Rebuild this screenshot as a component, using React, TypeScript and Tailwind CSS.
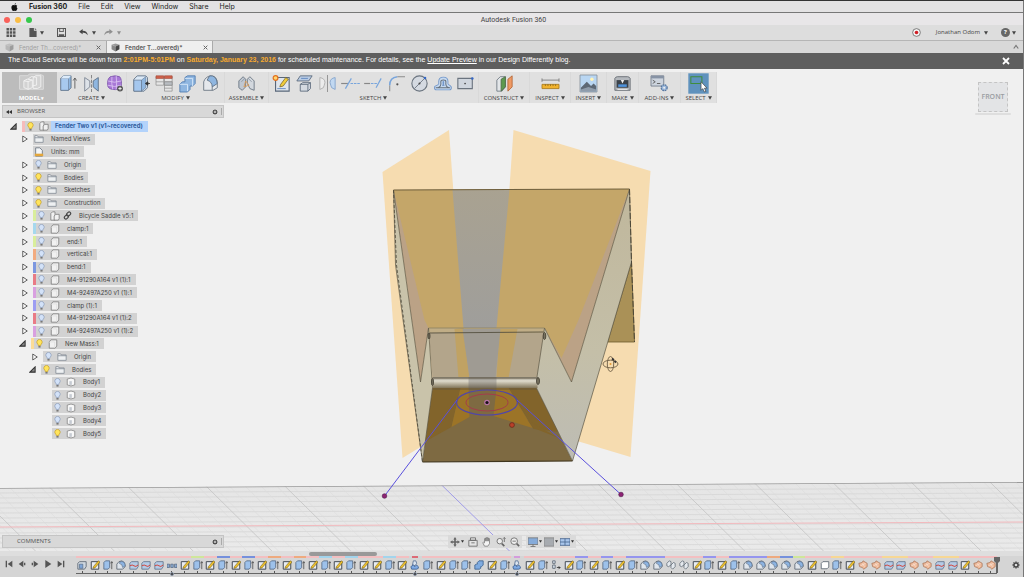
import React from "react";

/* ---------- small glyphs ---------- */

const Caret = () => (
  <svg viewBox="0 0 6 5" className="h-[4px] w-[4px] shrink-0" aria-hidden="true">
    <path d="M0 0h6L3 5z" fill="#444" />
  </svg>
);

const Gear = ({ className }: { className: string }) => (
  <svg viewBox="0 0 16 16" className={className} aria-hidden="true">
    <g stroke="#444" strokeWidth="2.6">
      <path d="M8 1v14M1 8h14M3 3l10 10M13 3L3 13" />
    </g>
    <circle cx="8" cy="8" r="5" fill="#444" />
    <circle cx="8" cy="8" r="2.6" fill="#ddd" />
  </svg>
);

const Cube = ({ dim }: { dim?: boolean }) => (
  <svg viewBox="0 0 16 16" className={dim ? "h-[9px] w-[9px] opacity-40" : "h-[9px] w-[9px]"} aria-hidden="true">
    <path d="M1 3l7-2 7 2-6 3z" fill="#999" />
    <path d="M1 3l7 3v9L1 11z" fill="#888" />
    <path d="M8 6l7-3v8l-7 4z" fill="#444" />
  </svg>
);

/* ---------- ribbon icons, 20 x 20 ---------- */

const B = "#8fb6e0";
const E = "#5a6b80";

const ribbonArt: Record<string, React.ReactNode> = {
  model: (
    <g stroke="#f4f4f4" strokeWidth="1" fill="#d3d3d3">
      <path d="M-4 2h9l3-2h11l5 2v16H-4z" fill="#cacaca" stroke="#dedede" />
      <path d="M12 4l3-2h6v13l-4 2h-5z" />
      <path d="M1 8l4-2 6 1v9l-5 2-5-2z" />
      <path d="M1 8l5 1v9M6 9l5-2" fill="none" />
      <path d="M6 6l4-3 6 1v9l-5 1" fill="none" />
    </g>
  ),
  extrude: (
    <g>
      <path d="M1 4l3-3h9v14l-3 3H1z" fill={B} stroke={E} />
      <path d="M1 4h9v14H1z" fill="#a8c9ee" stroke={E} strokeWidth=".6" />
      <path d="M1 4l3-3h9l-3 3z" fill="#dcebfa" />
      <path d="M17.500 16V4M15.500 6.500l2-3 2 3" fill="none" stroke="#555" />
    </g>
  ),
  mirror: (
    <g>
      <path d="M2 3l6 4v7l-6 5z" fill="#dde2e8" stroke="#77818f" />
      <path d="M18 3l-6 4v7l6 5z" fill={B} stroke={E} />
      <path d="M10 0v20" stroke="#777" strokeDasharray="4 1.500" />
    </g>
  ),
  form: (
    <g>
      <path d="M5 2q6-2 11 0 3 3 2 12-3 4-10 3-6-1-6-5-1-7 3-10z" fill="#a878d6" stroke="#7c55aa" />
      <path d="M2 7q8 3 16 0M2 12q8 3 16 0M7 2q-1 8 1 15M12 1q1 8 0 16" fill="none" stroke="#e0ccf4" strokeWidth=".9" />
      <circle cx="16.500" cy="16" r="3.500" fill="#555" />
      <path d="M14.500 16h4M16.500 14v4" stroke="#fff" />
    </g>
  ),
  press: (
    <g>
      <path d="M1 5l4-4h10l2 2v12l-4 4H1z" fill="#dbe9f7" stroke={E} />
      <path d="M1 6h9v13H1z" fill="#a5c7ee" stroke={E} strokeWidth=".7" />
      <path d="M10 6l5-4v13l-5 4z" fill={B} stroke={E} strokeWidth=".6" />
      <path d="M20 10h-4M17.500 8L14.500 10l3 2z" fill="#333" stroke="#333" />
    </g>
  ),
  change: (
    <g stroke="#8a8a8a" strokeWidth=".8">
      <path d="M0 2h9v10H0zM10 2h9v17h-9z" fill="#e6e6e6" />
      <path d="M0 1h9v3H0zM10 1h9v3h-9z" fill="#d2614b" stroke="#a55040" />
      <path d="M0 8h9M10 8h9M10 12h9M10 15.500h9" />
      <path d="M10 8h9v4h-9z" fill="#b9bdc2" />
    </g>
  ),
  combine: (
    <g>
      <path d="M7 3l3-2h9v9l-3 3h-3v4l-3 3H1V11l3-3h3z" fill={B} stroke="#4b78ae" />
      <path d="M7 4h9v9M1 11h9v8" fill="none" stroke="#dcebfa" />
    </g>
  ),
  fillet: (
    <g>
      <path d="M2 18V8q2-6 8-7 8 0 8 9v5l-5 3z" fill="#e5e8ec" stroke="#66717e" />
      <path d="M9 1q8-1 9 9l-6 4q0-6-6-8z" fill={B} stroke={E} />
      <path d="M12 14v4" stroke="#66717e" />
    </g>
  ),
  joint: (
    <g>
      <path d="M1 7l5-5 3 3v9l-4 4-4-3z" fill="#bfc7d1" stroke="#66717e" />
      <path d="M19 7l-5-5-3 3v5l3 6 5 2z" fill="#d3d8de" stroke="#66717e" />
      <path d="M4 8l4-4M16 8l-4-4" fill="none" stroke="#8b95a2" />
      <path d="M9 7l4 5-6 2z" fill="none" stroke="#d99a55" />
    </g>
  ),
  sketch: (
    <g>
      <path d="M3 3h16v16H3z" fill="#dfe5ed" stroke="#596779" strokeWidth="1.300" />
      <path d="M5 16h10" stroke="#5a83bd" />
      <path d="M9 11l6-8 3 2-6 8-4 1z" fill="#f0cc3c" stroke="#6b5820" strokeWidth=".8" />
      <circle cx="3" cy="3.500" r="2.800" fill="#ffd56c" stroke="#e26f1e" strokeWidth="1.400" />
    </g>
  ),
  project: (
    <g>
      <path d="M5 1h14l-4 6H1z" fill="#b8cbe4" stroke="#596779" />
      <path d="M5 11l3-2h9v7l-3 3H5z" fill="#d5dae1" stroke="#596779" />
      <path d="M5 11h9v8M14 11l3-2" fill="none" stroke="#596779" />
      <path d="M6 4h8" stroke="#5a83bd" />
    </g>
  ),
  mirror2: (
    <g>
      <path d="M1 17V3q6 1 6 6-1 4-2 6z" fill="#ececec" stroke="#aaa" />
      <path d="M19 17V3q-6 1-6 6 1 4 2 6z" fill="#c1d8f1" stroke="#7fa1ca" />
      <path d="M10 0v20" stroke="#888" />
    </g>
  ),
  trim: (
    <g strokeWidth="1.400">
      <path d="M-1 10h8" stroke="#888" />
      <path d="M10 10h11" stroke="#78a5dc" strokeDasharray="3 1" />
      <path d="M4 16l7-12" stroke="#78a5dc" />
    </g>
  ),
  extend: (
    <g strokeWidth="1.400">
      <path d="M-1 10h7" stroke="#888" />
      <path d="M7 10h8" stroke="#78a5dc" strokeDasharray="3 1" />
      <path d="M13 15l6-11" stroke="#78a5dc" />
    </g>
  ),
  arc: (
    <g fill="none">
      <path d="M2 19V12" stroke="#999" strokeWidth="1.400" />
      <path d="M2 12q0-9 9-10" stroke="#78a5dc" strokeWidth="1.800" />
      <path d="M11 2h9" stroke="#999" strokeWidth="1.400" />
      <circle cx="11" cy="11" r="1.300" fill="#555" />
    </g>
  ),
  circle: (
    <g>
      <circle cx="10" cy="10" r="9" fill="#d5dae1" stroke="#6b747f" strokeWidth="1.300" />
      <path d="M4 16L16 4" stroke="#6b747f" />
      <circle cx="16.500" cy="3.500" r="1.500" fill="#3567c4" />
      <circle cx="10" cy="10" r="1.200" fill="#444" />
    </g>
  ),
  offset: (
    <g fill="none" strokeLinejoin="round">
      <path d="M3 15h15M5 14q4-1 3-6 0-3 3-3t3 3q-1 5 3 6" stroke="#7196c9" strokeWidth="6" strokeLinecap="round" />
      <path d="M3 15h15M5 14q4-1 3-6 0-3 3-3t3 3q-1 5 3 6" stroke="#c6d9ef" strokeWidth="4" strokeLinecap="round" />
      <path d="M2 15h17M4 15q5-1 4-7 0-2 3-2t3 2q-1 6 4 7" stroke="#66717e" strokeWidth="1.200" />
    </g>
  ),
  rect: (
    <g>
      <path d="M1 4h17v12H1z" fill="#d0d6de" stroke="#6b747f" strokeWidth="1.300" />
      <circle cx="18" cy="4" r="1.500" fill="#3567c4" />
      <circle cx="9.500" cy="10" r="1" fill="#444" />
    </g>
  ),
  construct: (
    <g>
      <path d="M1 6l4-4h6v12l-4 5H1z" fill="#e3e6e9" stroke="#6c7680" />
      <path d="M6 5l5-3v12l-5 5z" fill="#5d9a4e" stroke="#4b6b45" />
      <path d="M14 5l5-4v13l-5 5z" fill="#ef9a64" stroke="#b46535" />
    </g>
  ),
  inspect: (
    <g>
      <path d="M0 6h20M0 4v4M20 4v4" stroke="#777" />
      <path d="M0 11h20v5H0z" fill="#f1b32e" stroke="#a87b1d" />
      <path d="M4 11v2M7 11v2M10 11v2M13 11v2M16 11v2" stroke="#7b5a12" strokeWidth=".8" />
    </g>
  ),
  insert: (
    <g>
      <path d="M0 0h20v20H0z" fill="#b9d6f2" stroke="#8a929c" />
      <circle cx="14" cy="5" r="2" fill="#fff4b8" />
      <path d="M1 15l7-7 5 5 3-3 3 3v6H1z" fill="#5d6875" />
      <path d="M1 17l9-3 9 3v2H1z" fill="#8f9cab" />
    </g>
  ),
  make: (
    <g>
      <path d="M1 4q1-2 3-2h12q2 0 3 2v14H1z" fill="#b4b8bd" stroke="#60666d" />
      <path d="M3 6h14v9H3z" fill="#3b424a" />
      <path d="M8 6h4l-2 4z" fill="#eee" />
      <path d="M5 11h10v3H5z" fill="#4e92dc" />
      <path d="M4 17h12" stroke="#eee" />
    </g>
  ),
  addins: (
    <g>
      <path d="M0 1h15v12H0z" fill="#cdd4de" stroke="#6f7a88" />
      <path d="M0 1h15v3H0z" fill="#8793a5" />
      <path d="M2 6l3 2-3 2M7 10h4" fill="none" stroke="#555" />
      <circle cx="15.500" cy="15" r="3.500" fill="#9cb9dd" stroke="#58779f" strokeWidth="1.500" strokeDasharray="2 .8" />
      <circle cx="15.500" cy="15" r="1.200" fill="#eee" />
    </g>
  ),
  select: (
    <g>
      <path d="M-2-2h24v24H-2z" fill="#5f92bd" />
      <path d="M1 2h13v8H1z" fill="none" stroke="#3f8d3b" strokeWidth="1.200" />
      <path d="M13 8v10l2-2 2 4 1.700-.8-1.700-3.700H20z" fill="#fff" stroke="#333" strokeWidth=".7" />
    </g>
  ),
};

const groups: { name: string; width: string; icons: string[] }[] = [
  { name: "CREATE", width: "w-[70px]", icons: ["extrude", "mirror", "form"] },
  { name: "MODIFY", width: "w-[98px]", icons: ["press", "change", "combine", "fillet"] },
  { name: "ASSEMBLE", width: "w-[44px]", icons: ["joint"] },
  {
    name: "SKETCH",
    width: "w-[210px]",
    icons: ["sketch", "project", "mirror2", "trim", "extend", "arc", "circle", "offset", "rect"],
  },
  { name: "CONSTRUCT", width: "w-[51px]", icons: ["construct"] },
  { name: "INSPECT", width: "w-[41px]", icons: ["inspect"] },
  { name: "INSERT", width: "w-[36px]", icons: ["insert"] },
  { name: "MAKE", width: "w-[32px]", icons: ["make"] },
  { name: "ADD-INS", width: "w-[42px]", icons: ["addins"] },
  { name: "SELECT", width: "w-[36px]", icons: ["select"] },
];

const RibbonIcon = ({ id }: { id: string }) => (
  <svg viewBox="0 0 20 20" className="h-[17px] w-[17px] overflow-visible" aria-hidden="true">
    {ribbonArt[id]}
  </svg>
);

function Ribbon() {
  return (
    <div className="ml-[2px] flex h-[31px] w-fit bg-[#e0e0e0] text-[6px] leading-[8px] text-[#444]">
      <button className="flex w-[55px] flex-col items-center gap-[3px] bg-[#bcbcbc] pt-[2px] pl-[4px] font-bold text-white">
        <RibbonIcon id="model" />
        <span className="flex items-center gap-px">
          MODEL<span className="text-[5px]">▾</span>
        </span>
      </button>
      {groups.map((g) => (
        <div key={g.name} className={`flex flex-col items-center gap-[2px] border-r border-[#d9d9d9] pt-[3px] ${g.width}`}>
          <div className="flex gap-[6px]">
            {g.icons.map((i) => (
              <button key={i} aria-label={i}>
                <RibbonIcon id={i} />
              </button>
            ))}
          </div>
          <button className="flex items-center gap-[2px] whitespace-nowrap">
            {g.name}
            <Caret />
          </button>
        </div>
      ))}
    </div>
  );
}

/* ---------- browser tree ---------- */

const Bulb = ({ on }: { on: boolean }) => (
  <svg viewBox="0 0 8 11" className="h-[9px] w-[7px] shrink-0" aria-hidden="true">
    <path
      d="M4 .5a3.300 3.300 0 0 1 2 5.900L5.500 8h-3L2 6.400A3.300 3.300 0 0 1 4 .5z"
      fill={on ? "#ffe45c" : "#d3e2f8"}
      stroke={on ? "#c39a1d" : "#8698b8"}
      strokeWidth=".8"
    />
    <path d="M2.700 8.500h2.600v2H2.700z" fill="#777" />
  </svg>
);

const nodeArt: Record<string, React.ReactNode> = {
  folder: <path d="M1 2h3l1 1.500h6V10H1zM1 4.500h10" fill="#eef0f2" stroke="#7d8590" strokeWidth=".9" />,
  units: (
    <g>
      <path d="M2 1h5l3 3v7H2z" fill="#f4f6f8" stroke="#66717e" />
      <path d="M1 8h10v3H1z" fill="#e3a63b" />
    </g>
  ),
  assembly: (
    <g fill="#f1f1f1" stroke="#737373" strokeWidth=".9">
      <path d="M1 3l2-2h3v10H1z" />
      <path d="M5 6l2-2h4v5l-1 2H5z" />
    </g>
  ),
  part: (
    <g fill="#f1f1f1" stroke="#737373" strokeLinejoin="round" strokeWidth=".9">
      <path d="M1.500 3.500l2-2.500h7v7.500l-2 2.500h-7z" />
      <path d="M1.500 3.500h6.500v7" stroke="#d5d5d5" strokeWidth=".6" />
    </g>
  ),
  body: (
    <g>
      <path d="M1.500 2.500q4.500-2.500 9 0v7q-4.500 2.500-9 0z" fill="#f8f8f8" stroke="#7d7d7d" strokeWidth=".9" />
      <path d="M4 5h3v4.500H4z" fill="#c5cad2" />
    </g>
  ),
};

const NodeIcon = ({ id }: { id: string }) => (
  <svg viewBox="0 0 12 12" className="h-[10px] w-[10px] shrink-0" aria-hidden="true">
    {nodeArt[id]}
  </svg>
);

type Row = {
  text: string;
  icon: string;
  indent: string;
  arrow?: "open" | "closed";
  bulb?: "on" | "off";
  stripe?: string;
  link?: boolean;
  root?: boolean;
};

const rows: Row[] = [
  { text: "Fender Two v1 (v1~recovered)", icon: "assembly", indent: "ml-[10px]", arrow: "open", bulb: "on", stripe: "bg-[#f6bcbc]", root: true },
  { text: "Named Views", icon: "folder", indent: "ml-[21px]", arrow: "closed" },
  { text: "Units: mm", icon: "units", indent: "ml-[21px]" },
  { text: "Origin", icon: "folder", indent: "ml-[21px]", arrow: "closed", bulb: "off" },
  { text: "Bodies", icon: "folder", indent: "ml-[21px]", arrow: "closed", bulb: "on" },
  { text: "Sketches", icon: "folder", indent: "ml-[21px]", arrow: "closed", bulb: "on" },
  { text: "Construction", icon: "folder", indent: "ml-[21px]", arrow: "closed", bulb: "on" },
  { text: "Bicycle Saddle v5:1", icon: "assembly", indent: "ml-[21px]", arrow: "closed", bulb: "off", stripe: "bg-[#d9ee9c]", link: true },
  { text: "clamp:1", icon: "part", indent: "ml-[21px]", arrow: "closed", bulb: "off", stripe: "bg-[#a5d8ee]" },
  { text: "end:1", icon: "part", indent: "ml-[21px]", arrow: "closed", bulb: "off", stripe: "bg-[#d9ee9c]" },
  { text: "vertical:1", icon: "part", indent: "ml-[21px]", arrow: "closed", bulb: "off", stripe: "bg-[#f2ab80]" },
  { text: "bend:1", icon: "part", indent: "ml-[21px]", arrow: "closed", bulb: "off", stripe: "bg-[#7c97e0]" },
  { text: "M4-91290A164 v1 (1):1", icon: "part", indent: "ml-[21px]", arrow: "closed", bulb: "off", stripe: "bg-[#e97b85]" },
  { text: "M4-92497A250 v1 (1):1", icon: "part", indent: "ml-[21px]", arrow: "closed", bulb: "off", stripe: "bg-[#d9a0e0]" },
  { text: "clamp (1):1", icon: "part", indent: "ml-[21px]", arrow: "closed", bulb: "off", stripe: "bg-[#9d9df2]" },
  { text: "M4-91290A164 v1 (1):2", icon: "part", indent: "ml-[21px]", arrow: "closed", bulb: "off", stripe: "bg-[#e97b85]" },
  { text: "M4-92497A250 v1 (1):2", icon: "part", indent: "ml-[21px]", arrow: "closed", bulb: "off", stripe: "bg-[#d9a0e0]" },
  { text: "New Mass:1", icon: "part", indent: "ml-[19px]", arrow: "open", bulb: "on", stripe: "bg-[#fbdc98]" },
  { text: "Origin", icon: "folder", indent: "ml-[31px]", arrow: "closed", bulb: "off" },
  { text: "Bodies", icon: "folder", indent: "ml-[29px]", arrow: "open", bulb: "on" },
  { text: "Body1", icon: "body", indent: "ml-[40px]", bulb: "off" },
  { text: "Body2", icon: "body", indent: "ml-[40px]", bulb: "off" },
  { text: "Body3", icon: "body", indent: "ml-[40px]", bulb: "off" },
  { text: "Body4", icon: "body", indent: "ml-[40px]", bulb: "off" },
  { text: "Body5", icon: "body", indent: "ml-[40px]", bulb: "on" },
];

const TreeRow = ({ row }: { row: Row }) => (
  <li className={`flex flex-1 items-center ${row.indent}`}>
    <span className="flex w-[12px] shrink-0 items-center">
      {row.arrow === "closed" && (
        <svg viewBox="0 0 8 10" className="ml-px h-[8px] w-[6px]" aria-hidden="true">
          <path d="M1 1l6 4-6 4z" fill="#fafafa" stroke="#444" strokeWidth="1.100" />
        </svg>
      )}
      {row.arrow === "open" && (
        <svg viewBox="0 0 8 8" className="h-[7px] w-[7px]" aria-hidden="true">
          <path d="M7 1v6H1z" fill="#888" stroke="#333" strokeWidth="1.200" />
        </svg>
      )}
    </span>
    <span className={`flex h-[11px] items-center bg-[#d2d2d2] ${row.root ? "" : "pr-[5px]"}`}>
      {row.stripe && <span className={`h-full w-[3px] ${row.stripe}`} />}
      {row.bulb && (
        <span className="mr-[4px] ml-[2px] flex">
          <Bulb on={row.bulb === "on"} />
        </span>
      )}
      <span className="ml-px flex">
        <NodeIcon id={row.icon} />
      </span>
      {row.link && (
        <svg viewBox="0 0 12 12" className="ml-[3px] h-[9px] w-[9px]" aria-hidden="true">
          <g fill="none" stroke="#444" strokeWidth="1.500">
            <rect x="5.500" y="1" width="4" height="6" rx="2" transform="rotate(45 7.500 4)" />
            <rect x="2.500" y="5" width="4" height="6" rx="2" transform="rotate(45 4.500 8)" />
          </g>
        </svg>
      )}
      {row.root ? (
        <span className="ml-[2px] flex h-full items-center bg-[#b3d3fb] pr-[5px] pl-[4px] font-bold text-[#2f5d9e]">{row.text}</span>
      ) : (
        <span className="ml-[7px]">{row.text}</span>
      )}
    </span>
  </li>
);

const PanelBar = ({ title, collapse }: { title: string; collapse?: boolean }) => (
  <div className="ml-[2px] flex h-[13px] w-[222px] items-center border border-[#c4c4c4] bg-[#d8d8d8] pr-px pl-[3px] text-[6px] text-[#555]">
    <span className="w-[11px]">
      {collapse && (
        <svg viewBox="0 0 12 8" className="h-[4px] w-[6px]" aria-hidden="true">
          <path d="M6 0v8L0 4zM12 0v8L6 4z" fill="#333" />
        </svg>
      )}
    </span>
    <span className="flex-1">{title}</span>
    <Gear className="h-[6px] w-[6px]" />
    <span className="ml-[3px] h-[7px] w-px bg-[#aaa]" />
  </div>
);

/* ---------- 3D scene ---------- */

const range = (n: number) => Array.from({ length: n }, (_, i) => i);

function Scene() {
  return (
    <svg
      viewBox="0 69 1024 482"
      preserveAspectRatio="xMidYMax slice"
      className="absolute inset-0 h-full w-full"
      aria-hidden="true"
    >
      <defs>
        <clipPath id="floor">
          <path d="M0 488L1024 482V551H0z" />
        </clipPath>
        <linearGradient id="ground" x1="0" y1="0" x2="0" y2="1">
          <stop offset="0" stopColor="#e5e5e5" />
          <stop offset="1" stopColor="#eaeaea" />
        </linearGradient>
        <linearGradient id="roll" x1="0" y1="0" x2="0" y2="1">
          <stop offset="0" stopColor="#8b8577" />
          <stop offset=".35" stopColor="#e0dccd" />
          <stop offset="1" stopColor="#817559" />
        </linearGradient>
        <linearGradient id="stripe" x1="0" y1="0" x2="0" y2="1">
          <stop offset="0" stopColor="#a9a291" />
          <stop offset="1" stopColor="#9f9e9b" />
        </linearGradient>
        <linearGradient id="wall" x1="0" y1="0" x2="0" y2="1">
          <stop offset="0" stopColor="#c0b79c" />
          <stop offset=".6" stopColor="#c4bfa8" />
          <stop offset="1" stopColor="#bdbcb4" />
        </linearGradient>
      </defs>

      <path d="M0 69h1024v482H0z" fill="#f0f0f0" />

      <g clipPath="url(#floor)">
        <path d="M0 480h1024v71H0z" fill="url(#ground)" />
        <g stroke="#d6d6d6" strokeWidth=".8">
          {range(13).map((i) => (
            <path key={i} d={`M0 ${493 + i * 5}L1024 ${488 + i * 5}`} />
          ))}
        </g>
        <g stroke="#dcdcdc" strokeWidth=".6">
          {range(72).map((i) => (
            <path key={i} d={`M${-108 + i * 15.8} 480l74 74`} />
          ))}
        </g>
        <g stroke="#c4c4c4" strokeWidth=".8">
          {range(14)
            .filter((i) => i !== 6)
            .map((i) => (
              <path key={i} d={`M${-36 + i * 78.8} 480l74 73`} />
            ))}
        </g>
        <path d="M0 527L1024 522" stroke="#f2b9bd" />
        <path d="M437 480l74 72" stroke="#a09ce8" />
        <path d="M0 488L1024 482" stroke="#9a9a9a" strokeWidth="1.600" />
      </g>

      {/* construction planes behind the part */}
      <path d="M383 172l66.500-42L470 417l-67 41z" fill="#f6dcb0" />
      <path d="M514 130l137 41-20 286-137-41z" fill="#f6dcb0" />

      {/* back panel */}
      <path d="M394 190l236-1-58 193-27-54H429l-8 54z" fill="#bba286" />
      <path d="M394 190l236-1-51 131-17 38-17-30H429l-4-8z" fill="#c4a669" />
      <path d="M453 190l57-1-13 139h-33z" fill="url(#stripe)" />

      {/* side flange */}
      <path d="M632 262l3 80h-27z" fill="#aa9157" stroke="#6d5a2e" strokeWidth=".8" />

      {/* inner rear plate */}
      <path d="M429 328h116l-7 50H433z" fill="#b3a58b" />
      <path d="M429 328h116l-1 5H430z" fill="#c0ad86" />
      <path d="M455 329l9-1 6 50h-11z" fill="#c0a263" />
      <path d="M500 329h18l-9 49h-12z" fill="#c0a263" />
      <path d="M463 329h38l-5 49h-26z" fill="#9f9b93" />

      {/* bottom plate */}
      <path d="M433 388h104l36 73-150 1z" fill="#7e6a42" />
      <path d="M433 388h28l-9 39-27 15z" fill="#82642b" />
      <path d="M509 388h28l22 44-25-3z" fill="#82642b" />
      <path d="M461 388h8l1 29-18 10z" fill="#9c7427" />
      <path d="M497 388h12l24 40-39-12z" fill="#9c7427" />
      <path d="M534 428l-6-8 31 18z" fill="#82642b" />

      {/* side walls */}
      <path d="M394 190l27 192 8-54 4 60-10 74-27-197z" fill="#c9c3aa" stroke="#5c5645" strokeWidth=".7" />
      <path d="M630 189l-58 193-27-54-8 52v8l36 73 59-199z" fill="url(#wall)" stroke="#5c5645" strokeWidth=".7" />
      <path d="M394 190l3 75 26 197" fill="none" stroke="#4c4738" strokeWidth=".8" strokeDasharray="3 2" />
      <path d="M630 189l2 73 3 80" fill="none" stroke="#4c4738" strokeDasharray="6 2" />
      <path d="M394 190l236-1" stroke="#6f5f3c" strokeWidth="1.200" />
      <path d="M423 462l150-1" stroke="#3f351e" strokeWidth="1.200" />
      <path d="M430 333l114-1" stroke="#55503f" strokeWidth=".9" />
      <path d="M429 328h116" stroke="#8c8262" strokeWidth=".8" />

      {/* hinge roll */}
      <rect x="433" y="377" width="105" height="11" fill="url(#roll)" />
      <path d="M469 377h28v11h-28z" fill="#55555e" opacity=".3" />
      <path d="M433 378h105M433 389h104" stroke="#5f5541" strokeWidth=".8" />
      <g fill="#77725f" stroke="#3d392e" strokeWidth=".8">
        <ellipse cx="433" cy="382" rx="1" ry="3.500" />
        <ellipse cx="538.500" cy="381" rx="1.500" ry="3.500" />
        <ellipse cx="429.500" cy="336" rx="1" ry="3" />
        <ellipse cx="545" cy="336" rx="1.300" ry="3.500" />
      </g>

      {/* sketch curves */}
      <g fill="none">
        <ellipse cx="487.500" cy="402.500" rx="30.500" ry="12.500" stroke="#5146a8" strokeWidth="1.200" />
        <ellipse cx="487.500" cy="402.500" rx="21" ry="8.500" stroke="#a33c4c" />
        <path d="M457.500 400L385 496M517.500 400l104 94.500" stroke="#5a50dd" />
      </g>
      <g fill="#8e2374" stroke="#4e194a" strokeWidth=".6">
        <circle cx="385" cy="496" r="2.300" />
        <circle cx="621.500" cy="494.500" r="2.300" />
      </g>
      <circle cx="487.500" cy="402.500" r="2.800" fill="#b673a4" />
      <circle cx="487.500" cy="402.500" r="1.600" fill="#181018" />
      <circle cx="512.500" cy="425" r="2.400" fill="#b9402a" stroke="#6d2a18" strokeWidth=".8" />

      {/* orbit pointer */}
      <g fill="none" stroke="#6d5d45" strokeWidth=".9">
        <ellipse cx="611" cy="364" rx="7.500" ry="3.800" />
        <ellipse cx="611" cy="364" rx="3.200" ry="7.500" />
        <path d="M612.500 358.500l2 1.500M615 361l1.500 1.500" stroke="#333" strokeWidth="1.800" />
        <circle cx="611" cy="364" r="1" fill="#e29a35" stroke="none" />
      </g>
    </svg>
  );
}

/* ---------- timeline ---------- */

const stepArt: Record<string, React.ReactNode> = {
  s: (
    <g>
      <path d="M1.500 2h9v9h-9z" fill="#e9edf2" stroke="#444b55" strokeWidth="1.200" />
      <path d="M4 8l6-7 2 1.500-6 7-2.500.5z" fill="#efc22f" stroke="#5c4a12" strokeWidth=".6" />
    </g>
  ),
  e: (
    <g>
      <path d="M1 3l2-2h5v8l-2 2H1z" fill="#9dc1ea" stroke="#4c617c" strokeWidth=".9" />
      <path d="M10.500 11V2M9 4l1.500-2L12 4" fill="none" stroke="#444" strokeWidth=".9" />
    </g>
  ),
  f: (
    <g>
      <path d="M1 11V5q2-4 6-4 4 1 4 6v1l-3 3z" fill="#dfe5ec" stroke="#5a6470" />
      <path d="M5 2q6-1 6 5L8 9q0-4-4-5z" fill="#8db4e2" stroke="#4c617c" strokeWidth=".7" />
    </g>
  ),
  p: (
    <g>
      <path d="M1 4l2-2h8v6l-2 3H1z" fill="#b4cbe6" stroke="#566a83" strokeWidth=".9" />
      <path d="M1 7q3-2 5 0t5-1" fill="none" stroke="#d2453c" strokeWidth="1.200" />
    </g>
  ),
  d: <path d="M0 5h3v4H0zM4.500 5h3v4h-3zM9 5h3v4H9z" fill="#8ba9d0" stroke="#4c617c" strokeWidth=".8" />,
  c: (
    <g>
      <path d="M1 4l2-2h8v6l-2 3H1z" fill="#cfd7e0" stroke="#5a6470" />
      <path d="M3 5h4v5H3z" fill="#7fa5d6" stroke="#4c617c" strokeWidth=".7" />
    </g>
  ),
  b: <path d="M1.500 4l2-2h7v6.500l-2 2h-7z" fill="#fff" stroke="#5a6470" />,
  m: <path d="M4 3l2-2h5v5L9 8H8v2l-1.500 1H1V6l2-1h1z" fill="#7fabe0" stroke="#40648f" />,
  j: (
    <g>
      <path d="M4 1h3l1 3-2 3-3-1z" fill="#dce5f0" stroke="#47628a" strokeWidth=".9" />
      <path d="M1 8l3-2 2 2 2-2 2 2v2l-2 1H2z" fill="#7faae4" stroke="#32578c" strokeWidth=".9" />
    </g>
  ),
  a: (
    <g>
      <path d="M2 1h3v3H2zM2 6h3v4H2z" fill="#dce5f0" stroke="#5a6470" />
      <path d="M7 9h4M9 8l2 1-2 2" fill="none" stroke="#333" />
    </g>
  ),
  l: (
    <g fill="#e5e9ee" stroke="#5a6470" strokeWidth=".9">
      <path d="M1 4l3-3 2 1v4L3 8 1 7z" />
      <path d="M6 6l3-3 2 1v4l-3 3-2-2z" />
    </g>
  ),
  w: (
    <g stroke="#a0684a" strokeWidth=".8">
      <path d="M1 4l4-1 1-2 5 3v4l-4 3-2-2-3-1z" fill="#efbb9c" />
      <path d="M5 4l3 4M3 7l6-3" stroke="#f8e6da" />
    </g>
  ),
};

const stripColors: Record<string, string> = {
  P: "bg-[#f3bfc1]",
  L: "bg-[#cfe69a]",
  B: "bg-[#7590dc]",
  O: "bg-[#eeaa7f]",
  C: "bg-[#a2d4ec]",
  R: "bg-[#dd6a76]",
  V: "bg-[#d49cdc]",
  I: "bg-[#9595ee]",
  Y: "bg-[#f7d794]",
};

const steps = "csefpppdsesesesesesesessesjeseemsejseaseseseffllsesefffffsbeswwppwwppsww";
const strips = "PPPPPPPPPLPBPBPOPOPCPCPPCPRPPPPPPPVPPPPIPIPIIIPPPIPIIIOBLPPYPPPYYPPYYPPP";

const transport = [
  "M1 1h2v10H1zM11 1v10L4 6z",
  "M8 1v10L1 6zM9 4h2v4H9z",
  "M4 1v10l7-5zM1 4h2v4H1z",
  "M2 0v12l9-6z",
  "M1 1v10l7-5zM9 1h2v10H9z",
];

function Timeline() {
  return (
    <footer className="flex h-[21px] shrink-0 bg-[#d5d5d5]">
      <div className="flex w-[76px] shrink-0 items-start gap-[5px] pt-[4px] pl-[5px]">
        {transport.map((d) => (
          <button key={d} aria-label="Timeline control" className="flex">
            <svg viewBox="0 0 12 12" className="h-[8px] w-[8px]">
              <path d={d} fill="#555" />
            </svg>
          </button>
        ))}
      </div>
      <ol className="flex flex-1">
        {strips.split("").map((c, i) => (
          <li key={i} className="flex min-w-0 flex-1 flex-col items-center">
            <span
              className={`h-[2px] shrink-0 ${c === "R" || c === "V" ? "w-[6px]" : "w-full"} ${stripColors[c]}`}
            />
            <svg viewBox="0 0 12 12" className="mt-[2px] h-[10px] w-[10px] shrink-0" aria-hidden="true">
              {stepArt[steps[i]]}
            </svg>
            <span className="mt-px h-[2px] w-px shrink-0 bg-[#555]" />
            <span className="h-px w-full shrink-0 bg-[#666]" />
            {(i === 7 || i === 26 || i === 34) && (
              <span className="-mt-[2px] h-[4px] w-[4px] shrink-0 rounded-full border border-[#8a94a5] bg-[#333]" />
            )}
          </li>
        ))}
      </ol>
      <div className="flex w-[26px] shrink-0 items-start justify-between pr-[3px]">
        <svg viewBox="0 0 6 18" className="-ml-[3px] h-[18px] w-[6px]" aria-hidden="true">
          <path d="M0 1h6v4L4 7v10H2V7L0 5z" fill="#666" />
        </svg>
        <button aria-label="Timeline settings" className="pt-[5px]">
          <Gear className="h-[8px] w-[8px]" />
        </button>
      </div>
    </footer>
  );
}

/* ---------- navigation bar ---------- */

const navArt: React.ReactNode[] = [
  <path key="0" d="M6 0l2 3H7v2h2V4l3 2-3 2V7H7v2h1l-2 3-2-3h1V7H3v1L0 6l3-2v1h2V3H4z" fill="#666" />,
  <g key="1" fill="#e4e4e4" stroke="#666"><path d="M1 4h10v7H1zM3 1h6v3H3z" /><path d="M4 7h4" /></g>,
  <path key="2" d="M3 11L1 7l1-1 1 1V2h1.500v3V1H6v4-4h1.500v4V2H9v6l-2 3z" fill="#f4f4f4" stroke="#666" strokeWidth=".8" />,
  <g key="3" fill="#eee" stroke="#666"><circle cx="4.500" cy="5" r="3.300" /><path d="M7 8l3 3" strokeWidth="2" /><path d="M10 1v5M8.500 2L10 .5 11.500 2" fill="none" /></g>,
  <g key="4" fill="#eee" stroke="#666"><circle cx="5" cy="5" r="4" /><path d="M8 8l3 3" strokeWidth="2" /><path d="M3 5h4" /></g>,
  <g key="5"><path d="M0 1h12v8H0z" fill="#86abd9" stroke="#777" /><path d="M3 11.500h6M6 9v2" stroke="#666" /></g>,
  <path key="6" d="M0 1h12v10H0z" fill="#a7abb0" stroke="#888" />,
  <path key="7" d="M0 2h12v8H0zM6 2v8M0 6h12" fill="#a9c6ec" stroke="#47658f" />,
];

const NavItem = ({ i, menu }: { i: number; menu?: boolean }) => (
  <button aria-label={`View control ${i + 1}`} className="flex items-center gap-px">
    <svg viewBox="0 0 12 12" className="h-[10px] w-[10px]">{navArt[i]}</svg>
    {menu && (
      <svg viewBox="0 0 6 5" className="h-[3px] w-[3px]" aria-hidden="true">
        <path d="M0 0h6L3 5z" fill="#333" />
      </svg>
    )}
  </button>
);

/* ---------- application ---------- */

const DocTab = ({ label, active }: { label: string; active?: boolean }) => (
  <button
    role="tab"
    aria-selected={!!active}
    className={
      active
        ? "flex w-[107px] items-center gap-[5px] border-r border-l border-[#aaa] bg-[#efefef] pr-[4px] pl-[4px] font-bold text-[#666]"
        : "flex w-[106px] items-center gap-[5px] pr-[5px] pl-[5px] text-[#a0a0a0]"
    }
  >
    <Cube dim={!active} />
    <span className="flex-1 text-left whitespace-nowrap">{label}</span>
    <svg viewBox="0 0 8 8" className="h-[5px] w-[5px]" aria-hidden="true">
      <path d="M1 1l6 6M7 1L1 7" stroke="#666" strokeWidth="1.600" />
    </svg>
  </button>
);

export default function App() {
  return (
    <div className="flex h-screen flex-col overflow-hidden border-t border-r border-t-[#333] border-r-[#777] bg-[#dedede] font-['Open_Sans','Noto_Sans',sans-serif] text-[6px] text-[#444]">
      <nav className="flex h-[12px] shrink-0 items-center gap-[11px] border-b border-[#777] bg-[#e3e2e3] pt-px pl-[11px] font-['Inter',sans-serif] text-[7px] text-[#222]">
        <svg viewBox="0 0 14 16" className="h-[8px] w-[7px]" aria-hidden="true">
          <path d="M10 0q0 3-3 3.500Q7 1 10 0zM7 4.500Q10 3 12.500 5.500 9.500 8 13 11q-2 5-4 5-2-1-4 0Q2 16 1 11 0 5 4 4q2 0 3 .500z" fill="#111" />
        </svg>
        <a href="#app" className="font-bold">Fusion 360</a>
        <a href="#file">File</a>
        <a href="#edit">Edit</a>
        <a href="#view">View</a>
        <a href="#window">Window</a>
        <a href="#share">Share</a>
        <a href="#help">Help</a>
      </nav>

      <header className="grid h-[12px] shrink-0 grid-cols-3 items-center bg-[#e8e6e8] pt-px pl-[4px]">
        <div className="flex gap-[5px]">
          <span className="h-[6px] w-[6px] rounded-full bg-[#f9605a]" />
          <span className="h-[6px] w-[6px] rounded-full bg-[#fabd45]" />
          <span className="h-[6px] w-[6px] rounded-full bg-[#36c84b]" />
        </div>
        <h1 className="text-center font-['Roboto',sans-serif] text-[7px] leading-[10px]">Autodesk Fusion 360</h1>
      </header>

      <div className="flex h-[16px] shrink-0 items-center border-b border-[#b5b5b5] bg-[#dddddd] pr-[7px] pl-[6px]">
        <button aria-label="Data panel">
          <svg viewBox="0 0 11 11" className="h-[9px] w-[10px]">
            <path d="M0 0h3v3H0zM4 0h3v3H4zM8 0h3v3H8zM0 4h3v3H0zM4 4h3v3H4zM8 4h3v3H8zM0 8h3v3H0zM4 8h3v3H4zM8 8h3v3H8z" fill="#555" />
          </svg>
        </button>
        <button aria-label="File" className="ml-[13px] flex items-center gap-[3px]">
          <svg viewBox="0 0 8 10" className="h-[9px] w-[8px]"><path d="M0 0h5v3h3v7H0zM6 0l2 2H6z" fill="#555" /></svg>
          <Caret />
        </button>
        <button aria-label="Save" className="ml-[13px]">
          <svg viewBox="0 0 10 10" className="h-[9px] w-[9px]">
            <path d="M.5.5h9v9h-9z" fill="#ddd" stroke="#555" strokeWidth="1.200" />
            <path d="M2.500.5h5v4h-5zM2 7h6v2.500H2z" fill="#555" />
            <path d="M3.500 1h3v2.500h-3z" fill="#ddd" />
          </svg>
        </button>
        <button aria-label="Undo" className="ml-[13px] flex items-center gap-[4px]">
          <svg viewBox="0 0 10 8" className="h-[7px] w-[9px]"><path d="M0 3l4-3v2q5 0 6 5-2-3-6-3v2z" fill="#444" /></svg>
          <Caret />
        </button>
        <button aria-label="Redo" className="ml-[8px] flex items-center gap-[4px] opacity-50">
          <svg viewBox="0 0 10 8" className="h-[7px] w-[9px]"><path d="M10 3L6 0v2Q1 2 0 7q2-3 6-3v2z" fill="#444" /></svg>
          <Caret />
        </button>
        <div className="flex-1" />
        <button aria-label="Record" className="mr-[15px]">
          <svg viewBox="0 0 10 10" className="h-[9px] w-[9px]">
            <circle cx="5" cy="5" r="4.300" fill="#f4f4f4" stroke="#666" strokeWidth=".9" />
            <circle cx="5" cy="5" r="2" fill="#d01f26" />
          </svg>
        </button>
        <button className="flex items-center gap-[4px]">
          Jonathan Odom
          <Caret />
        </button>
        <button aria-label="Help" className="ml-[13px] flex items-center gap-[2px]">
          <span className="flex h-[9px] w-[9px] items-center justify-center rounded-full bg-[#666] font-bold text-white">?</span>
          <Caret />
        </button>
      </div>

      <div role="tablist" className="flex h-[12px] shrink-0 items-stretch bg-[#d8d8d8] font-['Inter',sans-serif]">
        <DocTab label="Fender Th...covered)*" />
        <DocTab label="Fender T...overed)*" active />
        <div className="flex-1" />
        <svg viewBox="0 0 8 8" className="mt-[3px] mr-[4px] h-[6px] w-[6px]" aria-hidden="true">
          <path d="M1 6l3-4 3 4" fill="none" stroke="#777" strokeWidth="1.600" />
        </svg>
      </div>

      <div className="flex h-[16px] shrink-0 items-center justify-between bg-[#5e5e5e] pr-[13px] pb-px pl-[8px] font-['Liberation_Sans',sans-serif] text-[7px] text-white">
        <p className="whitespace-nowrap">
          The Cloud Service will be down from <b className="text-[#f7ab2e]">2:01PM-5:01PM</b> on{" "}
          <b className="text-[#f7ab2e]">Saturday, January 23, 2016</b> for scheduled maintenance. For details, see the{" "}
          <a href="#preview" className="underline">Update Preview</a> in our Design Differently blog.
        </p>
        <button aria-label="Dismiss">
          <svg viewBox="0 0 8 8" className="h-[8px] w-[8px]"><path d="M1 1l6 6M7 1L1 7" stroke="#fff" strokeWidth="1.800" /></svg>
        </button>
      </div>

      <main className="relative flex min-h-0 flex-1 flex-col">
        <Scene />
        <div className="relative flex flex-1 flex-col pt-[3px]">
          <div className="flex items-start justify-between">
            <Ribbon />
            <div className="mt-[10px] mr-[12px] flex flex-col items-center">
              <button className="h-[30px] w-[30px] border border-dashed border-[#c4c4c4] bg-[#e3e4e6] text-[7px] font-semibold text-[#9a9da2]">
                FRONT
              </button>
              <span className="mt-px h-[2px] w-[36px] rounded-full bg-[#dedede]" />
            </div>
          </div>
          <aside className="-mt-[10px] w-fit">
            <PanelBar title="BROWSER" collapse />
            <ul className="mt-[2px] flex h-80 flex-col font-['Inter',sans-serif] text-[6px] leading-[8px]">
              {rows.map((r, i) => (
                <TreeRow key={i} row={r} />
              ))}
            </ul>
          </aside>
          <div className="mt-auto mb-[3px] grid grid-cols-[1fr_auto_1fr] items-center">
            <PanelBar title="COMMENTS" />
            <div className="flex gap-[4px]">
              <div className="flex h-[13px] items-center gap-[4px] bg-[#dadada] px-[2px]">
                <NavItem i={0} menu />
                <NavItem i={1} />
                <NavItem i={2} />
                <NavItem i={3} />
                <NavItem i={4} />
              </div>
              <div className="flex h-[13px] items-center gap-[2px] bg-[#dadada] px-[2px]">
                <NavItem i={5} menu />
                <NavItem i={6} menu />
                <NavItem i={7} menu />
              </div>
            </div>
          </div>
        </div>
      </main>

      <div className="flex h-[5px] shrink-0 items-center bg-[#dedede]">
        <span className="ml-[309px] h-[4px] w-[68px] rounded-full bg-[#999]" />
      </div>
      <Timeline />
    </div>
  );
}
